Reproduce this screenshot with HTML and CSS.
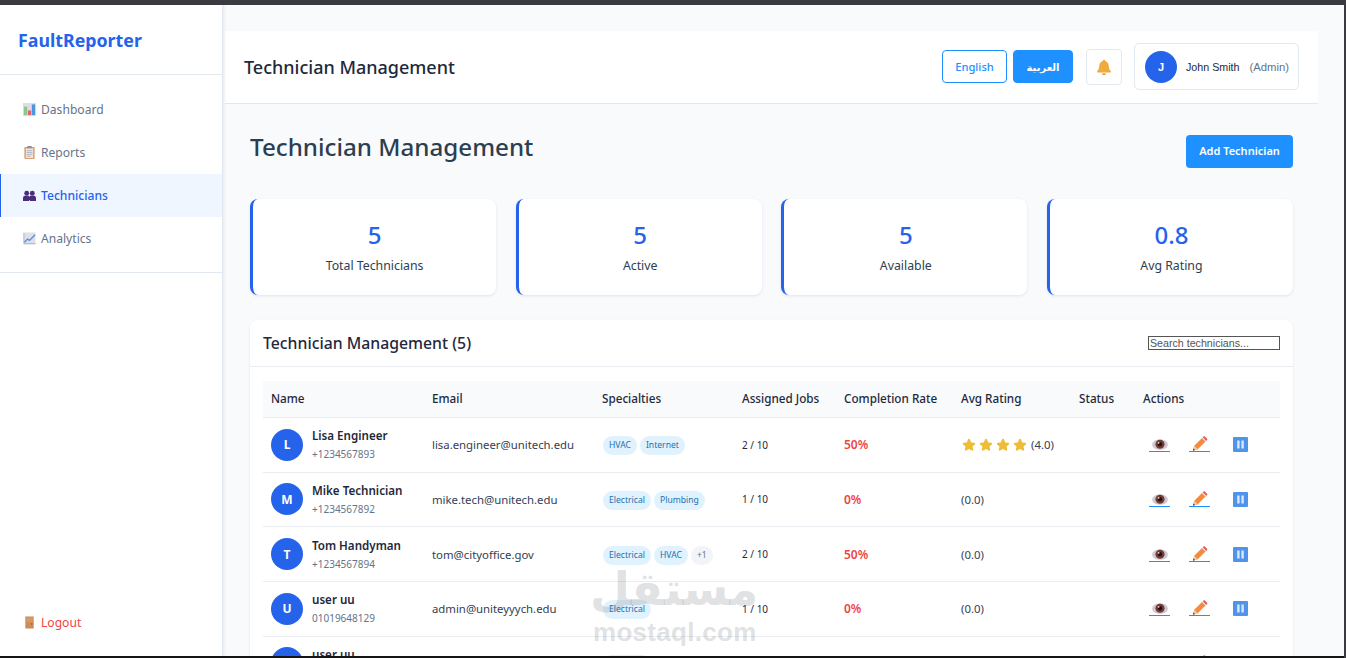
FILE: index.html
```html
<!DOCTYPE html>
<html lang="en">
<head>
<meta charset="utf-8">
<title>FaultReporter</title>
<link rel="stylesheet" href="styles.css">
</head>
<body>
<svg class="defs" width="0" height="0">
  <symbol id="i-eye" viewBox="0 0 20 14">
    <ellipse cx="10" cy="7" rx="10" ry="6.800" fill="#cfc9d2"/>
    <circle cx="10" cy="6.600" r="5.800" fill="#7a3b33"/>
    <circle cx="10" cy="6.600" r="2.800" fill="#1d1416"/>
    <circle cx="8.200" cy="4.800" r="1.100" fill="#f3e9e6"/>
  </symbol>
  <symbol id="i-pencil" viewBox="0 0 20 20">
    <path d="M.5 19.500l1.800-6.500L13 2.300l4.700 4.700L7 17.700z" fill="#f58a3c"/>
    <path d="M.5 19.500l1.800-6.500 4.700 4.700z" fill="#f3c9a0"/>
    <path d="M.5 19.500l.8-2.900 2.100 2.100z" fill="#5a3b2e"/>
    <path d="M13.500 1.800l1.300-1.300a1.200 1.200 0 0 1 1.600 0l3.100 3.100a1.200 1.200 0 0 1 0 1.600l-1.300 1.300z" fill="#ef5a5a"/>
    <path d="M12.400 2.900l1.100-1.100 4.700 4.700-1.100 1.100z" fill="#d9d9de"/>
  </symbol>
  <symbol id="i-pause" viewBox="0 0 15 15">
    <rect width="15" height="15" rx="1" fill="#4f94ea"/>
    <rect x="4.200" y="3.500" width="2.400" height="8" fill="#dbe8fb"/>
    <rect x="8.400" y="3.500" width="2.400" height="8" fill="#dbe8fb"/>
  </symbol>
  <symbol id="i-star" viewBox="0 0 14 14">
    <path d="M7 .8c.5 0 .8.3 1 .8l1.200 2.900 3 .3c1 .1 1.300 1 .6 1.700l-2.300 2.100.7 3c.2.900-.6 1.500-1.400 1L7 11.100l-2.800 1.500c-.8.5-1.600-.1-1.400-1l.7-3L1.200 6.500C.5 5.800.8 4.900 1.800 4.800l3-.3L6 1.600c.2-.5.500-.8 1-.8z" fill="#eebd34"/>
  </symbol>
</svg>

<div class="screen">
  <div class="topbar"></div>
  <div class="app">
    <aside class="sidebar">
      <div class="brand">FaultReporter</div>
      <nav class="nav">
        <a class="nav-item">
          <svg class="nav-icon" viewBox="0 0 14 14"><rect width="14" height="14" fill="#dcdde6"/><rect x="1" y="4" width="3.500" height="9" fill="#8cc987"/><rect x="5.300" y="8" width="3.500" height="5" fill="#e8606b"/><rect x="9.500" y="1.500" width="3.500" height="11.500" fill="#4a97df"/></svg>
          <span>Dashboard</span>
        </a>
        <a class="nav-item">
          <svg class="nav-icon" viewBox="0 0 14 14"><rect x="1.500" y="1" width="11" height="13" rx="1" fill="#dd9a5c"/><rect x="3" y="2.500" width="8" height="10.500" fill="#e6e6ec"/><rect x="4.500" y="0" width="5" height="2.500" rx=".6" fill="#8f8f9a"/><path d="M4 5h6M4 7h6M4 9h6M4 11h4" stroke="#a9a9b5" stroke-width=".8"/></svg>
          <span>Reports</span>
        </a>
        <a class="nav-item active">
          <svg class="nav-icon" viewBox="0 0 14 14"><circle cx="4" cy="4.500" r="2.600" fill="#4a2d7a"/><circle cx="10" cy="4.500" r="2.600" fill="#4a2d7a"/><path d="M0 13V10q0-3 3-3h2q1.500 0 1.800 1.500Q7.200 7 9 7h2q3 0 3 3v3H7.500v-1h-1v1z" fill="#4a2d7a"/></svg>
          <span>Technicians</span>
        </a>
        <a class="nav-item">
          <svg class="nav-icon" viewBox="0 0 14 14"><rect x=".5" y=".5" width="13" height="13" fill="#dfdfe8"/><path d="M1 12.500h12.500M1 1v11.500" stroke="#a9a9b8" stroke-width=".8"/><path d="M1.500 11L5 7.500l2 1.500L13 3" fill="none" stroke="#4a8fe0" stroke-width="1.300"/></svg>
          <span>Analytics</span>
        </a>
      </nav>
      <a class="logout">
        <svg class="nav-icon" viewBox="0 0 14 14"><rect x="2.500" y="0.500" width="9" height="13" fill="#c98d5d"/><rect x="3.500" y="1.500" width="7" height="4.500" fill="#d59b6b"/><rect x="2.500" y="6" width="9" height="1" fill="#e59a3a"/><circle cx="9.500" cy="8.500" r=".7" fill="#7a4a22"/></svg>
        <span>Logout</span>
      </a>
    </aside>

    <main class="main">
      <header class="header">
        <h1 class="header-title">Technician Management</h1>
        <div class="header-tools">
          <div class="lang">
            <button class="lang-btn">English</button>
            <button class="lang-btn on">العربية</button>
          </div>
          <button class="bell">
            <svg viewBox="0 0 16 16" width="16" height="16"><path d="M8 .8c.8 0 1.200.5 1.200 1.100 2.300.6 3.300 2.400 3.500 4.600.2 2.700.7 4.300 2.300 6v1H1v-1c1.600-1.700 2.100-3.300 2.300-6 .2-2.200 1.200-4 3.500-4.600C6.800 1.300 7.200.8 8 .8z" fill="#f0ab3d"/><path d="M6 14.500h4a2 1.500 0 0 1-4 0z" fill="#d98a26"/></svg>
          </button>
          <div class="user">
            <span class="user-avatar">J</span>
            <span class="user-name">John Smith</span>
            <span class="user-role">(Admin)</span>
          </div>
        </div>
      </header>

      <div class="content">
        <div class="page-head">
          <h2 class="page-title">Technician Management</h2>
          <button class="add-btn">Add Technician</button>
        </div>

        <section class="stats">
          <div class="stat"><div class="stat-num">5</div><div class="stat-label">Total Technicians</div></div>
          <div class="stat"><div class="stat-num">5</div><div class="stat-label">Active</div></div>
          <div class="stat"><div class="stat-num">5</div><div class="stat-label">Available</div></div>
          <div class="stat"><div class="stat-num">0.8</div><div class="stat-label">Avg Rating</div></div>
        </section>

        <section class="panel">
          <div class="panel-head">
            <h3 class="panel-title">Technician Management (5)</h3>
            <input class="search" type="text" placeholder="Search technicians...">
          </div>
          <div class="panel-body">
            <table class="table">
              <thead>
                <tr>
                  <th class="c-name">Name</th>
                  <th class="c-email">Email</th>
                  <th class="c-spec">Specialties</th>
                  <th class="c-jobs">Assigned Jobs</th>
                  <th class="c-rate">Completion Rate</th>
                  <th class="c-avg">Avg Rating</th>
                  <th class="c-status">Status</th>
                  <th class="c-act">Actions</th>
                </tr>
              </thead>
              <tbody>
                <tr>
                  <td><div class="person"><span class="avatar">L</span><div class="p-text"><div class="p-name">Lisa Engineer</div><div class="p-phone">+1234567893</div></div></div></td>
                  <td class="email">lisa.engineer@unitech.edu</td>
                  <td><span class="tag">HVAC</span><span class="tag">Internet</span></td>
                  <td class="jobs">2 / 10</td>
                  <td class="rate">50%</td>
                  <td class="score"><div class="rating"><svg class="star"><use href="#i-star"/></svg><svg class="star"><use href="#i-star"/></svg><svg class="star"><use href="#i-star"/></svg><svg class="star"><use href="#i-star"/></svg><span>(4.0)</span></div></td>
                  <td></td>
                  <td><div class="actions"><a class="act"><svg class="a-eye"><use href="#i-eye"/></svg></a><a class="act"><svg class="a-pen"><use href="#i-pencil"/></svg></a><svg class="a-pause"><use href="#i-pause"/></svg></div></td>
                </tr>
                <tr>
                  <td><div class="person"><span class="avatar">M</span><div class="p-text"><div class="p-name">Mike Technician</div><div class="p-phone">+1234567892</div></div></div></td>
                  <td class="email">mike.tech@unitech.edu</td>
                  <td><span class="tag">Electrical</span><span class="tag">Plumbing</span></td>
                  <td class="jobs">1 / 10</td>
                  <td class="rate">0%</td>
                  <td class="score">(0.0)</td>
                  <td></td>
                  <td><div class="actions"><a class="act"><svg class="a-eye"><use href="#i-eye"/></svg></a><a class="act"><svg class="a-pen"><use href="#i-pencil"/></svg></a><svg class="a-pause"><use href="#i-pause"/></svg></div></td>
                </tr>
                <tr>
                  <td><div class="person"><span class="avatar">T</span><div class="p-text"><div class="p-name">Tom Handyman</div><div class="p-phone">+1234567894</div></div></div></td>
                  <td class="email">tom@cityoffice.gov</td>
                  <td><span class="tag">Electrical</span><span class="tag">HVAC</span><span class="tag grey">+1</span></td>
                  <td class="jobs">2 / 10</td>
                  <td class="rate">50%</td>
                  <td class="score">(0.0)</td>
                  <td></td>
                  <td><div class="actions"><a class="act"><svg class="a-eye"><use href="#i-eye"/></svg></a><a class="act"><svg class="a-pen"><use href="#i-pencil"/></svg></a><svg class="a-pause"><use href="#i-pause"/></svg></div></td>
                </tr>
                <tr>
                  <td><div class="person"><span class="avatar">U</span><div class="p-text"><div class="p-name">user uu</div><div class="p-phone">01019648129</div></div></div></td>
                  <td class="email">admin@uniteyyych.edu</td>
                  <td><span class="tag">Electrical</span></td>
                  <td class="jobs">1 / 10</td>
                  <td class="rate">0%</td>
                  <td class="score">(0.0)</td>
                  <td></td>
                  <td><div class="actions"><a class="act"><svg class="a-eye"><use href="#i-eye"/></svg></a><a class="act"><svg class="a-pen"><use href="#i-pencil"/></svg></a><svg class="a-pause"><use href="#i-pause"/></svg></div></td>
                </tr>
                <tr>
                  <td><div class="person"><span class="avatar">U</span><div class="p-text"><div class="p-name">user uu</div><div class="p-phone">01019648130</div></div></div></td>
                  <td class="email">user@uniteyyych.edu</td>
                  <td><span class="tag">Electrical</span></td>
                  <td class="jobs">1 / 10</td>
                  <td class="rate">0%</td>
                  <td class="score">(0.0)</td>
                  <td></td>
                  <td><div class="actions"><a class="act"><svg class="a-eye"><use href="#i-eye"/></svg></a><a class="act"><svg class="a-pen"><use href="#i-pencil"/></svg></a><svg class="a-pause"><use href="#i-pause"/></svg></div></td>
                </tr>
              </tbody>
            </table>
          </div>
        </section>
      </div>
    </main>
  </div>
  <div class="bottombar"></div>
  <div class="rightbar"></div>
  <div class="watermark">
    <div class="wm-ar">مستقل</div>
    <div class="wm-en">mostaql.com</div>
  </div>
</div>
</body>
</html>
```

FILE: styles.css
```css
* { box-sizing: border-box; }
html, body { margin: 0; height: 100%; overflow: hidden; }
body { font-family: "Noto Sans", "DejaVu Sans", sans-serif; color: #1e293b; background: #f8fafc; font-size: 12px; }
.defs { position: absolute; }

.screen { position: relative; height: 658px; display: flex; flex-direction: column; }
.topbar { height: 5px; flex: none; background: #3a3a40; }
.bottombar { height: 2px; flex: none; background: #151515; }
.rightbar { position: absolute; top: 0; right: 0; bottom: 0; width: 2px; background: #3a3a40; }
.app { flex: 1; min-height: 0; display: flex; overflow: hidden; }

.sidebar { width: 223px; flex: none; background: #fff; border-right: 1px solid #e2e8f0; box-shadow: 1px 0 3px rgba(30, 41, 59, .08); display: flex; flex-direction: column; position: relative; z-index: 2; }
.brand { height: 70px; padding: 19px 18px 0; font-size: 17.800px; font-weight: 700; line-height: 33px; color: #2563eb; border-bottom: 1px solid #e2e8f0; }
.nav { padding: 13px 0 12px; border-bottom: 1px solid #e2e8f0; height: 198px; }
.nav-item { display: flex; align-items: center; height: 43px; padding-left: 23px; color: #64748b; font-size: 12.100px; gap: 5px; }
.nav-item.active { background: #eff6ff; color: #2563eb; font-weight: 500; box-shadow: inset 1px 0 0 #2563eb; }
.nav-icon { width: 13px; height: 13px; flex: none; }
.logout { margin-top: auto; margin-bottom: 12px; display: flex; align-items: center; height: 43px; padding-left: 23px; gap: 5px; color: #ef4444; font-size: 12.100px; }

.main { flex: 1; min-width: 0; padding: 26px 28px 0 2px; }
.header { height: 73px; background: #fff; border-bottom: 1px solid #e2e8f0; display: flex; align-items: center; justify-content: space-between; padding: 0 19px; }
.header-title { margin: 0; font-size: 18px; font-weight: 500; color: #1e293b; }
.header-tools { display: flex; align-items: center; }
.lang { display: flex; gap: 6px; margin: 0 13px 1px 0; }
.lang-btn { width: 65px; height: 33px; padding: 0; border: 1px solid #1e90ff; border-radius: 4px; background: #fff; color: #1e90ff; font: 500 11.200px "Noto Sans", "DejaVu Sans", sans-serif; }
.lang-btn.on { width: 60px; background: #1e90ff; color: #fff; font-weight: 700; font-size: 10px; }
.bell { width: 36px; height: 36px; padding: 0; border: 1px solid #e2e8f0; border-radius: 4px; background: #fff; display: flex; align-items: center; justify-content: center; margin-right: 12px; }
.user { width: 165px; height: 47px; margin-bottom: 1px; border: 1px solid #e2e8f0; border-radius: 5px; display: flex; align-items: center; padding-left: 10px; font-family: "Liberation Sans", sans-serif; font-size: 10.700px; }
.user-avatar { width: 32px; height: 32px; border-radius: 50%; background: #2563eb; color: #fff; font-weight: 700; font-size: 11px; display: flex; align-items: center; justify-content: center; margin-right: 9px; }
.user-name { color: #1e293b; margin-right: 10px; }
.user-role { color: #64748b; font-size: 11.300px; }

.content { padding: 0 25px; }
.page-head { display: flex; justify-content: space-between; align-items: flex-start; height: 95px; padding-top: 24px; }
.page-title { margin: 0; font-size: 24.200px; font-weight: 500; line-height: 38px; color: #2c3e50; }
.add-btn { margin-top: 7px; width: 107px; height: 33px; padding: 0 0 2px; border: 0; border-radius: 4px; background: #1e90ff; color: #fff; font: 600 11px "Noto Sans", sans-serif; }

.stats { display: grid; grid-template-columns: repeat(4, 1fr); gap: 19.500px; }
.stat { height: 96px; background: #fff; border-left: 3px solid #2563eb; border-radius: 8px; box-shadow: 0 1px 3px rgba(30, 41, 59, .1); text-align: center; padding-top: 18px; }
.stat-num { font-size: 24px; font-weight: 500; line-height: 36px; color: #2563eb; }
.stat-label { font-size: 12.300px; line-height: 20px; margin-top: 3px; color: #2c3e50; }

.panel { margin-top: 25px; background: #fff; border-radius: 8px; box-shadow: 0 1px 3px rgba(30, 41, 59, .08); }
.panel-head { height: 47px; border-bottom: 1px solid #e9edf2; display: flex; align-items: center; justify-content: space-between; padding: 0 13px; }
.panel-title { margin: 0; font-size: 15.800px; font-weight: 500; color: #1e293b; }
.search { width: 132px; height: 14px; padding: 0 1px; border: 1px solid #555; border-radius: 0; font: 10.670px "Liberation Sans", sans-serif; }
.search::placeholder { color: #555; }
.panel-body { padding: 14px 13px 0; }

.table { width: 100%; table-layout: fixed; border-collapse: collapse; }
.table th { height: 36.500px; padding: 0 8px 2px; background: #f8fafc; text-align: left; font-size: 11.700px; font-weight: 500; color: #1e293b; border-bottom: 1px solid #e9edf2; }
.c-name { width: 161px; }
.c-email { width: 170px; }
.c-spec { width: 140px; }
.c-jobs { width: 102px; }
.c-rate { width: 117px; }
.c-avg { width: 118px; }
.c-status { width: 64px; }
.table td { height: 54.670px; padding: 0 8px; font-size: 12px; color: #334155; border-bottom: 1px solid #e9edf2; white-space: nowrap; }
.table td.email, .table td.score { font-size: 11.350px; }
.person { display: flex; align-items: center; gap: 9px; }
.avatar { width: 32px; height: 32px; flex: none; border-radius: 50%; background: #2563eb; color: #fff; font-size: 12px; font-weight: 700; display: flex; align-items: center; justify-content: center; }
.p-text { margin-top: 1px; }
.p-name { font-size: 11.600px; font-weight: 600; line-height: 18px; color: #1e293b; }
.p-phone { font-size: 10px; line-height: 17px; margin-top: 1px; color: #64748b; }
.tag { display: inline-block; margin: 2px 3px 0 0; padding: 0 6px; height: 19px; line-height: 19px; border-radius: 10px; background: #e0f2fe; color: #1f6fb0; font-size: 8.600px; vertical-align: middle; }
.tag:first-child { margin-left: 1px; }
.tag.grey { background: #f1f5f9; color: #64748b; }
.table td.jobs { font-size: 10px; color: #1e293b; }
.table td.rate { font-weight: 600; color: #ef4444; }
.rating { display: flex; align-items: center; gap: 3px; padding-left: 1px; }
.rating span { margin-left: 1px; }
.star { width: 14px; height: 14px; }
.actions { display: flex; align-items: center; padding-left: 6px; }
.act { width: 21px; height: 15px; border-bottom: 1px solid #1e90ff; display: flex; justify-content: center; align-items: flex-end; margin-right: 19px; }
.act + .act { margin-right: 23px; }
.a-eye { width: 16px; height: 11px; margin-bottom: 1px; }
.a-pen { width: 16px; height: 15px; }
.a-pause { width: 15px; height: 15px; flex: none; }

.watermark { position: absolute; left: 590px; top: 561px; width: 163px; text-align: center; color: rgba(120, 125, 130, .24); pointer-events: none; z-index: 3; }
.wm-ar { font: 700 46px/57px "DejaVu Sans", sans-serif; }
.wm-en { font: 700 26px/28px "Liberation Sans", sans-serif; letter-spacing: .3px; margin-left: 3px; }
```
